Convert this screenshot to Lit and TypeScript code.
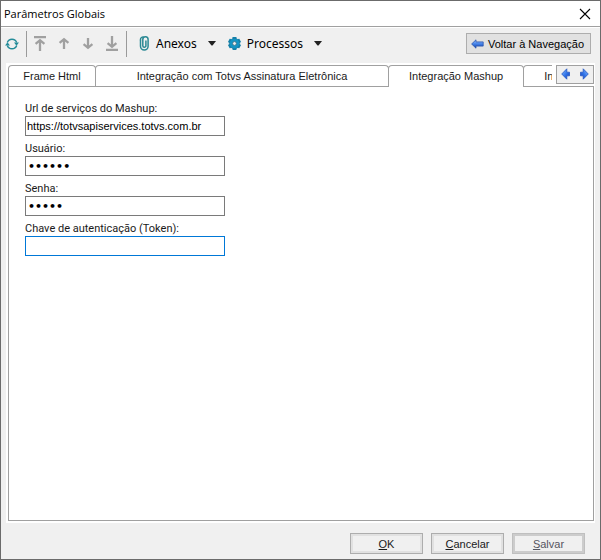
import { LitElement, html, css, svg } from "lit";
import { customElement, state } from "lit/decorators.js";
import { classMap } from "lit/directives/class-map.js";

interface Tab {
  id: string;
  label: string;
}

const TABS: Tab[] = [
  { id: "frame", label: "Frame Html" },
  { id: "signature", label: "Integração com Totvs Assinatura Eletrônica" },
  { id: "mashup", label: "Integração Mashup" },
  { id: "next", label: "Integração" },
];

const FIELDS = [
  { id: "url", label: "Url de serviços do Mashup:", type: "text", value: "https://totvsapiservices.totvs.com.br" },
  { id: "user", label: "Usuário:", type: "password", value: "totvs1" },
  { id: "pass", label: "Senha:", type: "password", value: "totvs" },
  { id: "token", label: "Chave de autenticação (Token):", type: "text", value: "" },
];

const MOVES = [
  { label: "Primeiro", path: svg`<path d="M1 1h12M7 15V5M2.6 7.8 7 4.2l4.4 3.6"/>` },
  { label: "Anterior", path: svg`<path d="M7 13V4M2.6 6.8 7 3.2l4.4 3.6"/>` },
  { label: "Próximo", path: svg`<path d="M7 2v9M2.6 8.2 7 11.8l4.4-3.6"/>` },
  { label: "Último", path: svg`<path d="M1 14h12M7 0v10M2.6 7.2 7 10.8l4.4-3.6"/>` },
];

@customElement("app-root")
export class AppRoot extends LitElement {
  @state() private active = "mashup";

  static styles = css`
    :host {
      display: block;
      font-family: "Liberation Sans", Arial, sans-serif;
      font-size: 11px;
      color: #1a1a1a;
    }
    * { box-sizing: border-box; }
    svg { display: block; flex: none; }
    button { font: inherit; color: inherit; padding: 0; margin: 0; border: 0; background: none; }
    .window {
      display: flex;
      flex-direction: column;
      min-height: 100vh;
      border: 1px solid #6b6b6b;
      background: #f0f0f0;
    }
    .title {
      display: flex;
      align-items: center;
      justify-content: space-between;
      height: 26px;
      padding: 0 9px 0 3px;
      background: #fff;
      border-bottom: 1px solid #a0a0a0;
    }
    .title h1 {
      margin: 0;
      font: 400 11px "Open Sans", "Noto Sans", sans-serif;
      color: #000;
    }
    .toolbar {
      display: flex;
      align-items: center;
      height: 32px;
      padding: 0 9px 0 4px;
      border-top: 1px solid #fff;
      font-family: "Noto Sans", "Open Sans", sans-serif;
      font-size: 12px;
      color: #000;
    }
    .sep { width: 1px; height: 26px; background: #9a9a9a; }
    .refresh { margin-right: 7px; }
    .moves { display: flex; gap: 10px; margin: 0 7px 0 6px; }
    .menu { display: flex; align-items: center; margin-left: 12px; }
    .menu span { margin: 0 11px 0 6px; }
    .back {
      display: flex;
      align-items: center;
      justify-content: center;
      gap: 4px;
      width: 125px;
      height: 21px;
      margin-left: auto;
      padding-right: 2px;
      border: 1px solid #adadad;
      background: #e1e1e1;
      font-family: "Liberation Sans", Arial, sans-serif;
      font-size: 11px;
      white-space: nowrap;
    }
    .content {
      flex: 1;
      display: flex;
      flex-direction: column;
      margin: 4px 5px 0;
      padding: 2px 1px 2px 2px;
      background: #fff;
    }
    .strip { display: flex; align-items: flex-start; gap: 4px; background: #fff; }
    .tabs {
      flex: 1;
      min-width: 0;
      display: flex;
      overflow: hidden;
      height: 22px;
      margin-bottom: -1px;
      z-index: 1;
    }
    .tab {
      flex: none;
      height: 21px;
      padding: 0 20px;
      border: 1px solid #a0a0a0;
      border-bottom: 0;
      border-radius: 4px 4px 0 0;
      background: #fff;
      white-space: nowrap;
    }
    .tab + .tab { margin-left: -1px; }
    .tab.first { padding: 0; width: 88px; }
    .tab.wide { padding: 0 40px; min-width: 294px; }
    .tab.active { height: 22px; padding-bottom: 1px; }
    .scroller {
      display: flex;
      height: 19px;
      border: 1px solid #a0a0a0;
      background: #f0f0f0;
    }
    .scroller button {
      display: flex;
      justify-content: center;
      align-items: flex-start;
      width: 18px;
      padding-top: 2px;
    }
    .panel {
      flex: 1;
      border: 1px solid #a0a0a0;
      padding: 14px 16px;
      display: flex;
      flex-direction: column;
      background: #fff;
    }
    .field { display: flex; flex-direction: column; align-items: flex-start; height: 40px; }
    .field label {
      height: 15px;
      line-height: 15px;
      font-family: Roboto, "Noto Sans", sans-serif;
    }
    .field input {
      width: 200px;
      height: 20px;
      padding: 0 1px;
      border: 1px solid #7a7a7a;
      border-radius: 0;
      outline: 0;
      background: #fff;
      color: #000;
      font: 11px "Liberation Sans", Arial, sans-serif;
    }
    .field input[type="password"] { padding: 0 2px; font: bold 11px "DejaVu Sans", sans-serif; }
    .field input.current { border-color: #0078d7; }
    .footer {
      display: flex;
      justify-content: flex-end;
      gap: 8px;
      padding: 10px 15px 5px;
    }
    .footer button {
      width: 73px;
      height: 21px;
      border: 1px solid #adadad;
      box-shadow: inset 0 0 0 2px #e1e1e1;
      background: #f0f0f0;
    }
    .footer button:disabled {
      border-color: #bfbfbf;
      box-shadow: inset 0 0 0 2px #ccc;
      color: #555560;
    }
  `;

  private caret() {
    return html`<svg width="8" height="5" viewBox="0 0 8 5" aria-hidden="true"><path d="M0 0h8L4.5 4.5h-1z" fill="#222"/></svg>`;
  }

  private gear() {
    const teeth = [0, 60, 120, 180, 240, 300];
    return html`<svg width="13" height="13" viewBox="0 0 13 13" aria-hidden="true">
      ${teeth.map((a) => svg`<rect x="4.5" y="0" width="4" height="4" rx="0.4" fill="#1482ac" transform="rotate(${a} 6.5 6.5)"/>`)}
      <circle cx="6.5" cy="6.5" r="5.2" fill="#1394c4" stroke="#217290" stroke-width=".5"/>
      <circle cx="6.5" cy="6.5" r="1.9" fill="#f0f0f0" stroke="#356b80" stroke-width=".8"/>
    </svg>`;
  }

  private blueArrow(dir: "left" | "right") {
    return html`<svg width="10" height="12" viewBox="0 0 10 12" aria-hidden="true">
      <defs><linearGradient id="a" x2="1" y2="1"><stop stop-color="#8fc3ff"/><stop offset=".55" stop-color="#2f72e8"/><stop offset="1" stop-color="#123fae"/></linearGradient></defs>
      <path d="M.7 6 5.8.8v3.4h2.7v3.6H5.8v3.4z" fill="url(#a)" stroke="#2457c4" stroke-width=".8" transform=${dir === "left" ? "" : "matrix(-1 0 0 1 10 0)"}/>
    </svg>`;
  }

  render() {
    return html`<main class="window">
      <header class="title">
        <h1>Parâmetros Globais</h1>
        <button aria-label="Fechar"><svg width="12" height="12" viewBox="0 0 12 12"><path d="M1 1l10 10M11 1 1 11" stroke="#000" stroke-width="1.1"/></svg></button>
      </header>
      <div class="toolbar" role="toolbar" aria-label="Ferramentas">
        <button class="refresh" aria-label="Atualizar">
          <svg width="14" height="14" viewBox="0 0 14 14" fill="none" stroke="#258c99" stroke-width="1.5">
            <path d="M2.3 5.6A5 5 0 0 1 11.7 5.6M11.7 8.4A5 5 0 0 1 2.3 8.4"/>
            <path d="M0 8.4h5L2.5 5.2zM14 5.6H9l2.5 3.2z" fill="#258c99" stroke="none"/>
          </svg>
        </button>
        <span class="sep"></span>
        <div class="moves">
          ${MOVES.map((m) => html`<button aria-label=${m.label}><svg width="14" height="15" viewBox="0 0 14 15" fill="none" stroke="#a0a0a0" stroke-width="2.3">${m.path}</svg></button>`)}
        </div>
        <span class="sep"></span>
        <button class="menu">
          <svg width="11" height="15" viewBox="0 0 11 15" fill="none" stroke="#2b8994" stroke-width="1.5" aria-hidden="true">
            <path d="M1.5 4.8v5.4a3.7 3.7 0 0 0 7.6 0V3.6a2.6 2.6 0 0 0-5.3-.2v6.3a1.5 1.5 0 0 0 3.1 0V4.6"/>
            <path d="M1.5 5V3.4A2.6 2.6 0 0 1 4.6 1" />
          </svg>
          <span>Anexos</span>${this.caret()}
        </button>
        <button class="menu">${this.gear()}<span>Processos</span>${this.caret()}</button>
        <button class="back">
          <svg width="13" height="10" viewBox="0 0 13 10" aria-hidden="true">
            <defs><linearGradient id="b" x2="0" y2="1"><stop stop-color="#9cc6ff"/><stop offset=".5" stop-color="#4280e8"/><stop offset="1" stop-color="#173f9e"/></linearGradient></defs>
            <path d="M.6 5 5 .8v2.1h7.2v4.2H5v2.1z" fill="url(#b)" stroke="#2c56ad" stroke-width=".8"/>
          </svg>
          Voltar à Navegação
        </button>
      </div>
      <section class="content">
        <div class="strip">
          <div class="tabs" role="tablist">
            ${TABS.map((t) => html`<button role="tab" aria-selected=${t.id === this.active}
              class=${classMap({ tab: true, first: t.id === "frame", wide: t.id === "signature", active: t.id === this.active })}
              @click=${() => (this.active = t.id)}>${t.label}</button>`)}
          </div>
          <div class="scroller">
            <button aria-label="Abas anteriores">${this.blueArrow("left")}</button>
            <button aria-label="Próximas abas">${this.blueArrow("right")}</button>
          </div>
        </div>
        <form class="panel" role="tabpanel">
          ${FIELDS.map((f) => html`<div class="field">
            <label for=${f.id}>${f.label}</label>
            <input id=${f.id} class=${classMap({ current: f.id === "token" })} type=${f.type} .value=${f.value} autocomplete="off" />
          </div>`)}
        </form>
      </section>
      <footer class="footer">
        <button><u>O</u>K</button>
        <button><u>C</u>ancelar</button>
        <button disabled><u>S</u>alvar</button>
      </footer>
    </main>`;
  }
}
